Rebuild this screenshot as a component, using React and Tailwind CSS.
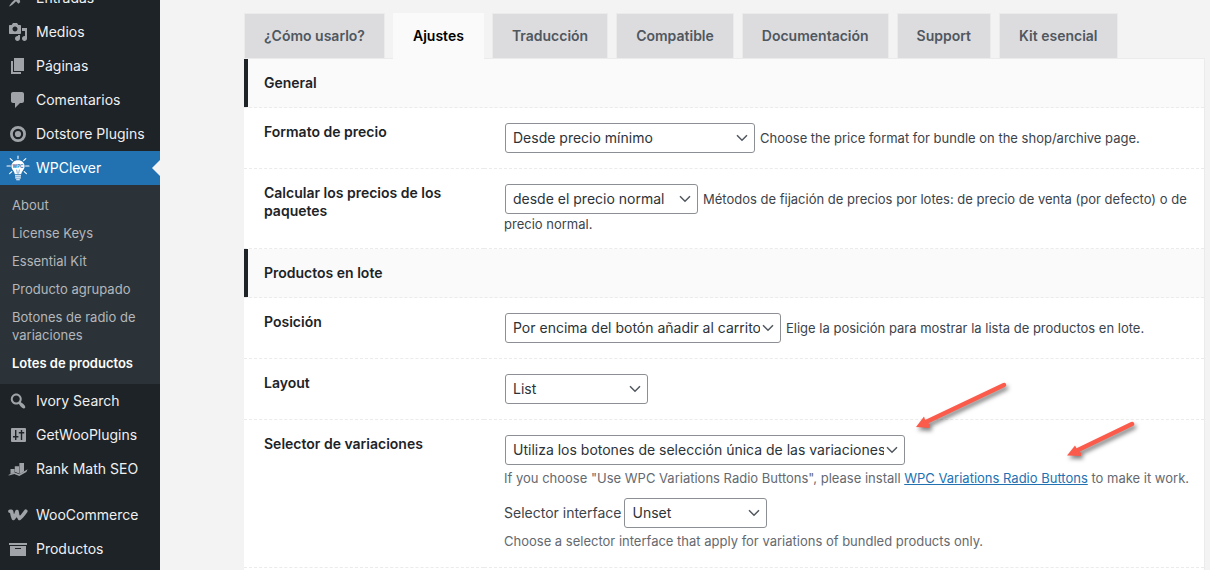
import React, { useState } from 'react';
import clsx from 'clsx';

function Icon({ children }) {
  return (
    <svg viewBox="0 0 20 20" className="w-5 h-5 shrink-0 fill-[#a0a4a9]" aria-hidden="true">
      {children}
    </svg>
  );
}

function BulbIcon() {
  return (
    <svg viewBox="0 0 24 26" className="w-6 h-[26px] -mx-0.5 shrink-0" aria-hidden="true">
      <g stroke="#fff" strokeWidth="1.1" strokeLinecap="round">
        <path d="M12 1v2.6M1 11h3.4M19.6 11H23M4.2 3.6l2.2 2.1M19.8 3.6l-2.2 2.1M3.6 18.6l2.2-2M20.4 18.6l-2.2-2" />
      </g>
      <path
        d="M12 5.2c-3.9 0-6.6 2.7-6.6 6.1 0 2.6 1.5 3.9 2.5 5.4.6.9.7 1.8.9 2.6h6.4c.2-.8.3-1.7.9-2.6 1-1.5 2.5-2.8 2.5-5.4 0-3.4-2.7-6.1-6.6-6.1z"
        fill="#fff"
      />
      <path d="M9 20.2h6v1.2H9zM9.2 22.2h5.6v1.2H9.2zM10.2 24.2h3.6v1.1h-3.6z" fill="#fff" />
      <text x="12" y="13" textAnchor="middle" fontSize="4.5" fontWeight="700" fontFamily="Inter, sans-serif" fill="#2271b1">
        WPC
      </text>
      <path d="M10.6 14.6l.8 4M13.4 14.6l-.8 4" stroke="#2271b1" strokeWidth=".6" />
    </svg>
  );
}

const ICONS = {
  post: (
    <Icon>
      <path d="M10.44 3.02l1.82-1.82 6.36 6.35-1.83 1.82c-1.05-.68-2.48-.57-3.41.36l-.75.75c-.92.93-1.04 2.35-.35 3.41l-1.83 1.82-2.41-2.41-2.8 2.79c-.42.42-3.38 2.71-3.8 2.29s1.86-3.39 2.28-3.81l2.79-2.79L4.1 9.36l1.83-1.82c1.05.69 2.48.57 3.4-.36l.75-.75c.93-.92 1.05-2.35.36-3.41z" />
    </Icon>
  ),
  media: (
    <Icon>
      <path d="M13 11V4c0-.55-.45-1-1-1h-1.67L9 1H5L3.67 3H2c-.55 0-1 .45-1 1v7c0 .55.45 1 1 1h10c.55 0 1-.45 1-1zM7 4.5c1.38 0 2.5 1.12 2.5 2.5S8.38 9.5 7 9.5 4.5 8.38 4.5 7 5.62 4.5 7 4.5zM14 6h5v10.5c0 1.38-1.12 2.5-2.5 2.5S14 17.88 14 16.5s1.12-2.5 2.5-2.5c.17 0 .34.02.5.05V9h-3V6zm-4 8.05V13h2v3.5c0 1.38-1.12 2.5-2.5 2.5S7 17.88 7 16.5 8.12 14 9.5 14c.17 0 .34.02.5.05z" />
    </Icon>
  ),
  page: (
    <Icon>
      <path d="M6 15V2h10v13H6zm-1 1h8v2H3V5h2v11z" />
    </Icon>
  ),
  comments: (
    <Icon>
      <path d="M5 2h9c1.1 0 2 .9 2 2v7c0 1.1-.9 2-2 2h-2l-5 5v-5H5c-1.1 0-2-.9-2-2V4c0-1.1.9-2 2-2z" />
    </Icon>
  ),
  dotstore: (
    <Icon>
      <circle cx="10" cy="10" r="6.6" fill="none" stroke="#a0a4a9" strokeWidth="2.8" />
      <circle cx="10" cy="10" r="3.1" />
    </Icon>
  ),
  bulb: <BulbIcon />,
  search: (
    <Icon>
      <path d="M12.14 4.18c1.87 1.87 2.11 4.75.72 6.89.12.1.22.21.36.31.2.16.47.36.81.59.34.24.56.39.66.47.42.31.73.57.94.78.32.32.6.65.84 1 .25.35.44.69.59 1.04.14.35.21.68.18 1-.02.32-.14.59-.36.81s-.49.34-.81.36c-.31.02-.65-.04-.99-.19-.35-.14-.7-.34-1.04-.59-.35-.24-.68-.52-1-.84-.21-.21-.47-.52-.77-.93-.1-.13-.25-.35-.47-.66-.22-.32-.4-.57-.56-.78-.16-.2-.29-.35-.44-.5-2.07 1.09-4.69.76-6.44-.98-2.14-2.15-2.14-5.64 0-7.78 2.15-2.15 5.63-2.15 7.78 0zm-1.41 6.36c1.36-1.37 1.36-3.58 0-4.95-1.37-1.37-3.59-1.37-4.95 0-1.37 1.37-1.37 3.58 0 4.95 1.36 1.37 3.58 1.37 4.95 0z" />
    </Icon>
  ),
  sliders: (
    <Icon>
      <path
        fillRule="evenodd"
        d="M4 3h13a1 1 0 0 1 1 1v12a1 1 0 0 1-1 1H4a1 1 0 0 1-1-1V4a1 1 0 0 1 1-1zM7 5v6H5v1.6h2V15h1.4v-2.4h2V11h-2V5zM12.8 5v2h-2v1.6h2V15h1.4V8.6h2V7h-2V5z"
      />
    </Icon>
  ),
  rank: (
    <Icon>
      <path d="M2.5 10h4v3.6l-4 1.6zM6.8 7.2h4.2v7.4L6.800 12.800zM11.4 4h4.600v8.600l-4.600 2.600z" />
      <path d="M.3 16l6-2.700 5 2 8.300-5-1.200 2.800-7.100 4-5-2-5.300 1.500z" />
    </Icon>
  ),
  woo: (
    <Icon>
      <path
        d="M1.900 6.300h1.600c.5 3 .9 5 1.900 7.100 1.900-1.700 2.900-4.200 3.600-6.900.2 3 .9 5.200 2.500 6.900 2.700-1.700 4.300-4.300 6.300-7.200"
        fill="none"
        stroke="#a0a4a9"
        strokeWidth="3.6"
        strokeLinejoin="round"
        strokeLinecap="round"
      />
    </Icon>
  ),
  archive: (
    <Icon>
      <path d="M19 4v2H1V4h18zM2 7h16v10H2V7zm11 3V9H7v1h6z" />
    </Icon>
  ),
};

const MENU_TOP = [
  { label: 'Entradas', icon: 'post' },
  { label: 'Medios', icon: 'media' },
  { label: 'Páginas', icon: 'page' },
  { label: 'Comentarios', icon: 'comments' },
  { label: 'Dotstore Plugins', icon: 'dotstore' },
  { label: 'WPClever', icon: 'bulb', current: true },
];

const SUBMENU = [
  { label: 'About' },
  { label: 'License Keys' },
  { label: 'Essential Kit' },
  { label: 'Producto agrupado' },
  { label: 'Botones de radio de variaciones' },
  { label: 'Lotes de productos', current: true },
];

const MENU_PLUGINS = [
  { label: 'Ivory Search', icon: 'search' },
  { label: 'GetWooPlugins', icon: 'sliders' },
  { label: 'Rank Math SEO', icon: 'rank' },
];

const MENU_SHOP = [
  { label: 'WooCommerce', icon: 'woo' },
  { label: 'Productos', icon: 'archive' },
];

const TABS = ['¿Cómo usarlo?', 'Ajustes', 'Traducción', 'Compatible', 'Documentación', 'Support', 'Kit esencial'];

function MenuItem({ item }) {
  return (
    <li>
      <a
        href="#"
        className={clsx(
          'relative flex items-center gap-2 h-[34px] px-2 text-sm whitespace-nowrap',
          item.current ? 'bg-[#2271b1] text-white' : 'text-[#f0f0f1]'
        )}
      >
        {ICONS[item.icon]}
        {item.label}
        {item.current && (
          <span className="absolute right-0 top-1/2 -translate-y-1/2 border-y-8 border-r-8 border-y-transparent border-r-[#f3f3f3]" />
        )}
      </a>
    </li>
  );
}

function Sidebar() {
  return (
    <nav className="w-40 shrink-0 bg-[#1d2327] overflow-hidden">
      {/* The menu is scrolled, its first rows are above the window */}
      <ul className="-mt-[19px]">
        {MENU_TOP.map(item => (
          <MenuItem key={item.label} item={item} />
        ))}
      </ul>
      <ul className="bg-[#2c3338] pt-1.5 pb-[7px] text-[13px] leading-[18px]">
        {SUBMENU.map(item => (
          <li key={item.label}>
            <a
              href="#"
              className={clsx('block px-3 py-[5px]', item.current ? 'text-white font-semibold' : 'text-[#b4b7bb]')}
            >
              {item.label}
            </a>
          </li>
        ))}
      </ul>
      <ul>
        {MENU_PLUGINS.map(item => (
          <MenuItem key={item.label} item={item} />
        ))}
      </ul>
      <ul className="mt-3">
        {MENU_SHOP.map(item => (
          <MenuItem key={item.label} item={item} />
        ))}
      </ul>
    </nav>
  );
}

function Select({ id, options, className }) {
  return (
    <span className={clsx('relative inline-block align-middle mx-px', className)}>
      <select
        id={id}
        className="block w-full h-[30px] appearance-none rounded-[3px] border border-[#8c8f94] bg-white pl-[7px] pr-5 text-sm text-[#2c3338]"
      >
        {options.map(option => (
          <option key={option}>{option}</option>
        ))}
      </select>
      <svg
        viewBox="0 0 12 8"
        className="pointer-events-none absolute right-[7px] top-[11px] w-3 h-2"
        fill="none"
        stroke="#50575e"
        strokeWidth="1.5"
      >
        <path d="M1 1.3l5 5 5-5" />
      </svg>
    </span>
  );
}

function HeadingRow({ children }) {
  return (
    <tr className="bg-[#fafafa]">
      <th
        colSpan={2}
        className="border-b border-dashed border-b-[#ebebeb] p-0 text-left text-sm leading-[18px] font-semibold text-[#1d2327]"
      >
        <div className="border-l-4 border-solid border-[#1d2327] py-[15px] pl-4">{children}</div>
      </th>
    </tr>
  );
}

function FieldRow({ title, htmlFor, children }) {
  return (
    <tr className="align-top">
      <th className="w-60 border-b border-dashed border-[#ebebeb] pl-5 pr-4 py-[15px] text-left text-sm leading-[18px] font-semibold text-[#1d2327]">
        <label htmlFor={htmlFor}>{title}</label>
      </th>
      <td className="border-b border-dashed border-[#ebebeb] pl-5 pr-3 py-[15px] text-[13px] leading-[18px] text-[#3c434a]">
        {children}
      </td>
    </tr>
  );
}

function Arrow({ className, width, height, shaft, head }) {
  return (
    <svg
      width={width}
      height={height}
      className={clsx('pointer-events-none absolute drop-shadow-[2px_3px_2px_rgba(0,0,0,0.5)]', className)}
      aria-hidden="true"
    >
      <path d={shaft} stroke="#fb5b4b" strokeWidth="4.5" strokeLinecap="round" />
      <path d={head} fill="#fb5b4b" />
    </svg>
  );
}

export default function App() {
  const [tab, setTab] = useState('Ajustes');

  return (
    <div className="relative flex h-screen overflow-hidden bg-[#f3f3f3] font-['Inter','Noto_Sans',sans-serif]">
      <Sidebar />

      <main className="flex min-w-0 flex-1 flex-col pl-[84px] pr-[5px] pt-[13px]">
        <div className="flex gap-2" role="tablist">
          {TABS.map(name => (
            <button
              key={name}
              role="tab"
              aria-selected={tab === name}
              onClick={() => setTab(name)}
              className={clsx(
                'border border-b-0 px-[19px] pt-2.5 text-sm leading-6 font-semibold whitespace-nowrap',
                tab === name
                  ? 'relative -mb-px pb-[11px] border-[#fafafa] bg-[#fafafa] text-black'
                  : 'pb-2.5 border-[#ebebeb] bg-[#dcdcde] text-[#50575e]'
              )}
            >
              {name}
            </button>
          ))}
        </div>

        <div className="flex-1 border-t border-r border-[#ebebeb] bg-white">
          <table className="w-full border-separate border-spacing-0">
            <tbody>
              <HeadingRow>General</HeadingRow>
              <FieldRow title="Formato de precio" htmlFor="price-format">
                <Select id="price-format" className="w-[250px]" options={['Desde precio mínimo']} />
                <span className="ml-1 align-middle">Choose the price format for bundle on the shop/archive page.</span>
              </FieldRow>
              <FieldRow title="Calcular los precios de los paquetes" htmlFor="price-from">
                <Select id="price-from" className="w-[193px]" options={['desde el precio normal']} />
                <span className="ml-1 align-middle">
                  Métodos de fijación de precios por lotes: de precio de venta (por defecto) o de precio normal.
                </span>
              </FieldRow>
              <HeadingRow>Productos en lote</HeadingRow>
              <FieldRow title="Posición" htmlFor="position">
                <Select id="position" className="w-[276px]" options={['Por encima del botón añadir al carrito']} />
                <span className="ml-1 align-middle">Elige la posición para mostrar la lista de productos en lote.</span>
              </FieldRow>
              <FieldRow title="Layout" htmlFor="layout">
                <Select id="layout" className="w-[143px]" options={['List']} />
              </FieldRow>
              <FieldRow title="Selector de variaciones" htmlFor="variations">
                <Select
                  id="variations"
                  className="w-[400px]"
                  options={['Utiliza los botones de selección única de las variaciones de WPC']}
                />
                <p className="mt-1 text-[#646970]">
                  If you choose "Use WPC Variations Radio Buttons", please install{' '}
                  <a href="#" className="text-[#2271b1] underline">
                    WPC Variations Radio Buttons
                  </a>{' '}
                  to make it work.
                </p>
                <div className="mt-[11px] flex items-center gap-0.5">
                  <label htmlFor="interface" className="text-sm">
                    Selector interface
                  </label>
                  <Select id="interface" className="w-[143px]" options={['Unset']} />
                </div>
                <p className="mt-1 pb-0.5 text-[#646970]">
                  Choose a selector interface that apply for variations of bundled products only.
                </p>
              </FieldRow>
            </tbody>
          </table>
        </div>
      </main>

      {/* Annotation arrows */}
      <Arrow
        className="left-[914px] top-[380px]"
        width={96}
        height={54}
        shaft="M90 5L12 42"
        head="M2 47L10 36.5L11.5 41L16 44.5L15.5 48z"
      />
      <Arrow
        className="left-[1065px] top-[419px]"
        width={76}
        height={44}
        shaft="M67 5L12 31.5"
        head="M2 36.5L10 26.5L12 30L16 34L16 37z"
      />
    </div>
  );
}
